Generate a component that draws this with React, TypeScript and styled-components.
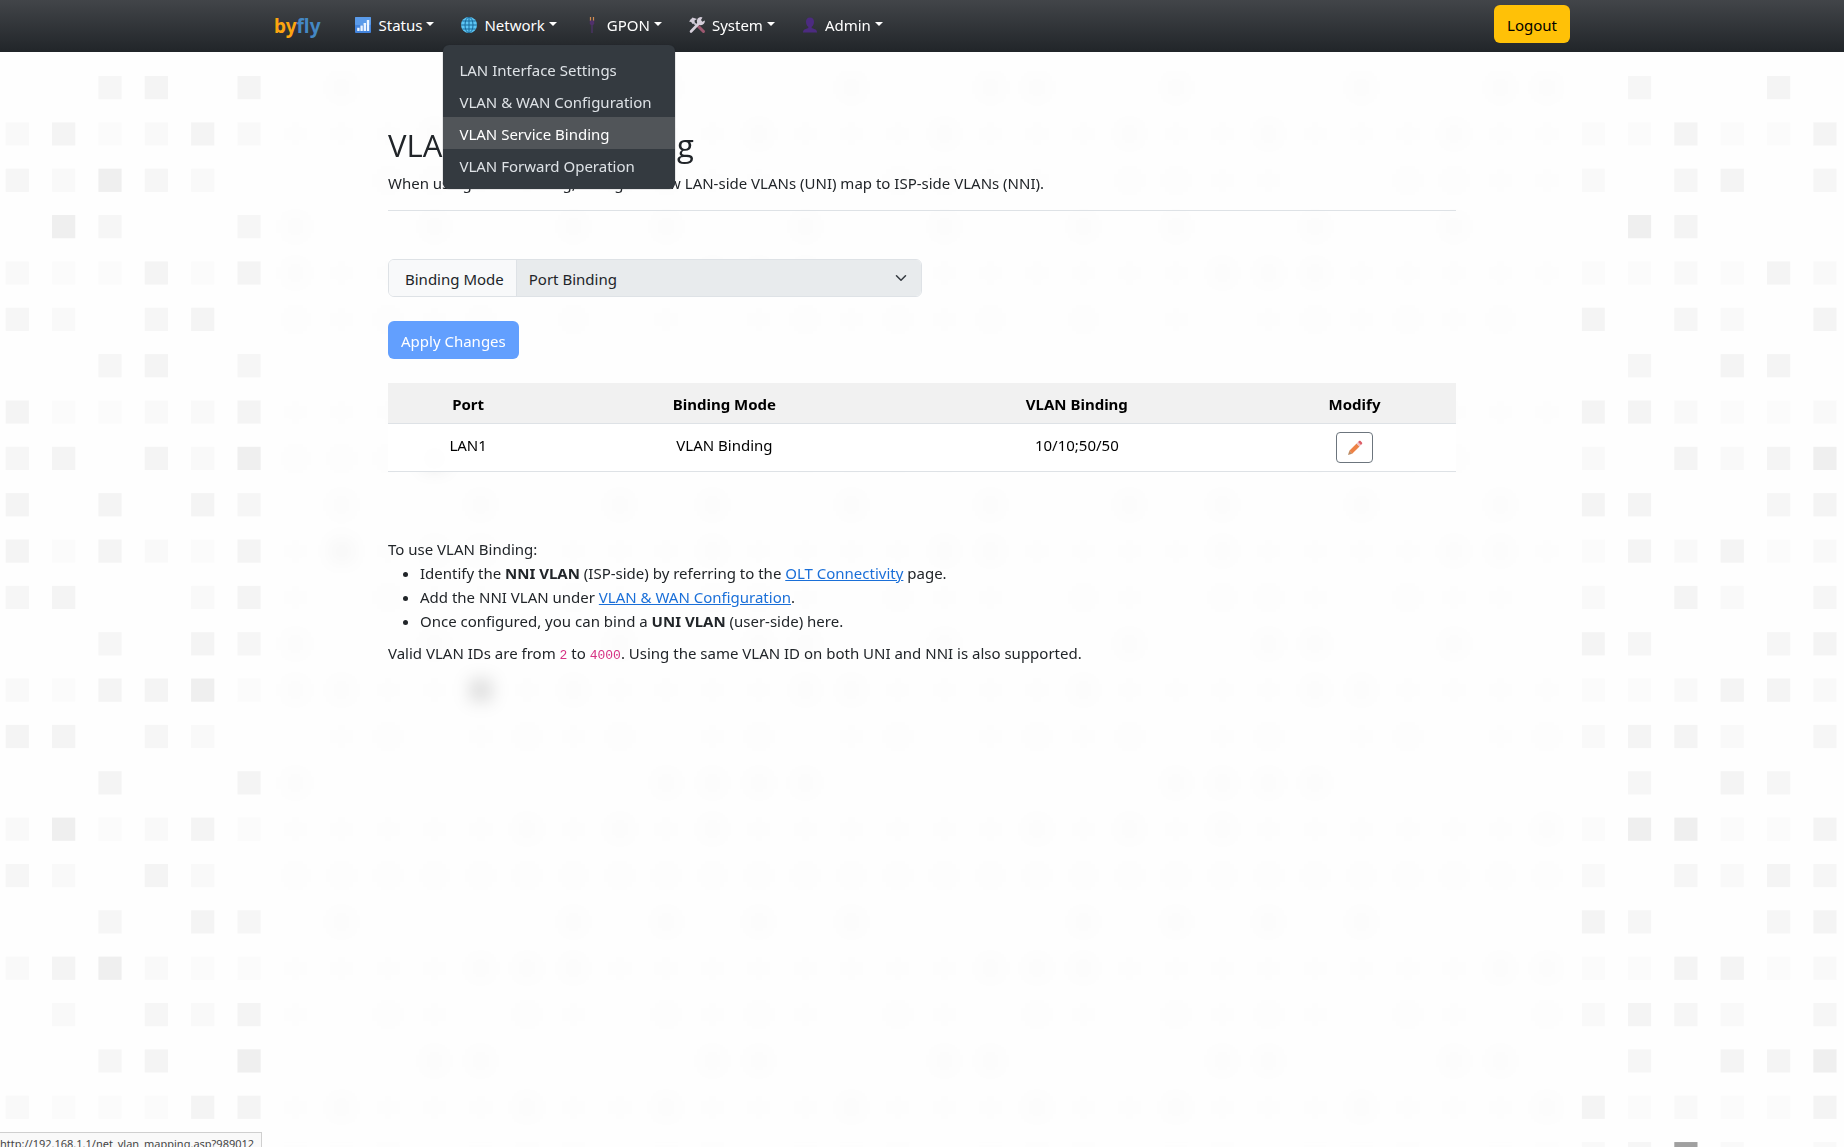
import React from "react";
import styled, { createGlobalStyle } from "styled-components";

const font = `"Noto Sans", "Open Sans", sans-serif`;

const GlobalStyle = createGlobalStyle`
  *, *::before, *::after { box-sizing: border-box; }
  html, body, #root { min-height: 100vh; }
  body {
    margin: 0;
    background: #fefefe;
    color: #212529;
    font-family: ${font};
    font-size: 15px;
    line-height: 24px;
  }
`;

const Page = styled.div`
  position: relative;
  isolation: isolate;
  display: flex;
  flex-direction: column;
  min-height: 100vh;
`;

const Backdrop = styled.svg`
  position: fixed;
  inset: 0;
  z-index: -1;
  width: 100%;
  height: 100%;
`;

const Navbar = styled.header`
  position: relative;
  z-index: 10;
  background: linear-gradient(180deg, #424549, #212529);
`;

const NavInner = styled.div`
  display: flex;
  align-items: flex-start;
  max-width: 1320px;
  height: 52px;
  margin: 0 auto;
  padding: 5px 12px 0;
`;

const Brand = styled.a`
  display: flex;
  margin-right: 24px;
  padding-top: 6px;
  color: #fca510;
  font-size: 19px;
  font-weight: 700;
  line-height: 30px;
  text-decoration: none;

  span { color: #4488c4; }
`;

const Menu = styled.ul`
  display: flex;
  flex: 1;
  gap: 8px;
  margin: 0;
  padding: 0;
  list-style: none;
`;

const MenuItem = styled.li`
  position: relative;
`;

const MenuLink = styled.a`
  display: flex;
  align-items: center;
  gap: 4px;
  padding: 8px;
  color: #fff;
  text-decoration: none;

  svg { width: 22px; height: 18px; }

  &::after {
    content: "";
    border: 4px solid transparent;
    border-top-color: #fff;
    border-bottom: 0;
    margin-bottom: 2px;
  }
`;

const Dropdown = styled.ul`
  position: absolute;
  top: 40px;
  left: -7px;
  min-width: 232px;
  margin: 0;
  padding: 8px 0;
  list-style: none;
  background: #343a40;
  border-radius: 6px;
  box-shadow: 0 0 1px #212529;
`;

const DropdownLink = styled.a<{ $active?: boolean }>`
  display: block;
  padding: 5px 16px 3px;
  color: ${(p) => (p.$active ? "#fff" : "#dee2e6")};
  background: ${(p) => (p.$active ? "#515559" : "transparent")};
  white-space: nowrap;
  text-decoration: none;
`;

const Button = styled.button`
  height: 38px;
  padding: 2px 12px 0;
  border: 1px solid transparent;
  border-radius: 6px;
  font: inherit;
`;

const LogoutButton = styled(Button)`
  background: #ffc107;
  color: #000;
`;

const ApplyButton = styled(Button)`
  margin: 24px 0;
  background: #629ffe;
  color: #fff;
`;

const EditButton = styled.button`
  display: inline-flex;
  align-items: center;
  justify-content: center;
  width: 37px;
  height: 31px;
  padding: 0;
  background: transparent;
  border: 1px solid #6c757d;
  border-radius: 4px;
  vertical-align: top;
`;

const Panel = styled.main`
  flex: 1;
  width: 100%;
  max-width: 1320px;
  margin: 0 auto;
  padding: 74px 24px 40px;
  background: rgba(254, 254, 254, 0.7);
  backdrop-filter: blur(8px);
`;

const Content = styled.div`
  max-width: 1068px;
  margin: 0 auto;
`;

const Title = styled.h2`
  margin: 0 0 7px;
  font-family: "Open Sans", sans-serif;
  font-size: 31px;
  font-weight: 400;
  line-height: 38px;
`;

const Text = styled.p`
  margin: 0;
`;

const Rule = styled.hr`
  margin: 15px 0 48px;
  border: 0;
  border-top: 1px solid #dee2e6;
`;

const Field = styled.div`
  display: flex;
  width: 50%;
  height: 38px;
  border: 1px solid #dee2e6;
  border-radius: 6px;
  overflow: hidden;
`;

const FieldLabel = styled.label`
  padding: 7px 12px 0 16px;
  background: #f8f9fa;
  border-right: 1px solid #dee2e6;
  white-space: nowrap;
`;

const SelectBox = styled.div`
  display: grid;
  flex: 1;
  align-items: center;
  background: #e8ebed;

  > * { grid-area: 1 / 1; }
  svg { justify-self: end; margin-right: 14px; pointer-events: none; }
`;

const Select = styled.select`
  width: 100%;
  height: 100%;
  padding: 2px 36px 0 12px;
  appearance: none;
  background: transparent;
  border: 0;
  color: #212529;
  font: inherit;
  opacity: 1;
`;

const Table = styled.table`
  width: 100%;
  table-layout: fixed;
  border-collapse: collapse;
  color: #000;
  text-align: center;

  th, td {
    padding: 8px;
    border-bottom: 1px solid #dee2e6;
    vertical-align: top;
  }
  th { padding: 9px 8px 7px; background: #f1f1f1; font-weight: 700; }
  td { background: rgba(255, 255, 255, 0.9); }
  td:not(:last-child) { line-height: 26px; }
`;

const Col = styled.col<{ $share: number }>`
  width: ${(p) => p.$share}%;
`;

const Help = styled.section`
  margin-top: 65px;

  ul { margin: 0 0 8px; padding-left: 32px; }
  a { color: #1a6fd8; }
  code { font-family: "Liberation Mono", monospace; font-size: 13px; color: #d63384; }
`;

const StatusBar = styled.div`
  position: fixed;
  left: 0;
  bottom: 0;
  z-index: 20;
  height: 15px;
  padding-right: 7px;
  overflow: hidden;
  background: #f9f9f9;
  border: 1px solid #cfcfcf;
  border-width: 1px 1px 0 0;
  color: #444;
  font-size: 11px;
  line-height: 22px;
  white-space: nowrap;
`;

/* Shade of each tile in the outer columns, row by row: 0 is empty, 6 the darkest. */
const leftTiles = [
  "003404", "241242", "325320", "053003", "211414", "320340", "003403", "411224",
  "340425", "404043", "414214", "340024", "003043", "214451", "440320", "004004",
  "251241", "320420", "003043", "245211", "020324", "003405", "211144", "000000",
];
const rightTiles = [
  "030040", "114114", "203403", "054000", "112142", "403204", "030440", "442112",
  "204245", "440034", "142412", "204203", "430034", "112442", "244203", "030430",
  "155114", "203243", "430034", "114412", "243203", "030445", "412114", "236202",
];
const shades = ["", "#fbfbfb", "#f9f9f9", "#f6f6f6", "#f4f4f4", "#efefef", "#a0a0a0"];
const darkTiles: Record<string, string> = { "13-10": "#9a9a9a", "8-9": "#c0c0c0", "10-7": "#e8e8e8" };

const PITCH = 46.35;
const TILE = 23.2;

/* Every third row is sparse, the one after it full and pale, the last one mixed. */
const middleTile = (row: number, col: number) => {
  const n = (row * 73 + col * 151 + row * col * 17) % 11;
  const kind = row % 3;
  if (kind === 0) return n < 4 ? 3 : 0;
  if (kind === 1) return n < 3 ? 3 : 1;
  return n < 3 ? 0 : n < 7 ? 1 : 2;
};

const tileFill = (row: number, col: number) => {
  const special = darkTiles[`${row}-${col}`];
  if (special) return special;
  if (col < 6) return shades[Number(leftTiles[row][col])];
  if (col > 33) return shades[Number(rightTiles[row][col - 34])];
  return shades[middleTile(row, col)];
};

const Tiles = () => (
  <Backdrop viewBox="0 0 1844 1147" preserveAspectRatio="xMidYMin slice" aria-hidden="true">
    {leftTiles.map((_, row) =>
      Array.from({ length: 40 }, (_, col) => {
        const fill = tileFill(row, col);
        return fill ? (
          <rect key={`${row}-${col}`} x={5.7 + col * PITCH} y={76 + row * PITCH} width={TILE} height={TILE} fill={fill} />
        ) : null;
      })
    )}
  </Backdrop>
);

const BarsIcon = () => (
  <svg viewBox="0 0 22 18" aria-hidden="true">
    <rect x="3" y="1" width="16" height="16" rx="1" fill="#4384dc" />
    <rect x="3" y="1" width="16" height="8" rx="1" fill="#5a9bea" />
    <path d="M5.2 15v-3.2h2.4V15zM8.4 15v-5.5h2.4V15zM11.6 15V7h2.4v8zM14.8 15V4h2.4v11z" fill="#eaf4ff" />
  </svg>
);

const GlobeIcon = () => (
  <svg viewBox="0 0 22 18" fill="none" stroke="#1b6a9c" strokeWidth="1" aria-hidden="true">
    <circle cx="11" cy="9" r="8" fill="#5cc6f5" stroke="none" />
    <ellipse cx="11" cy="9" rx="4" ry="7.8" />
    <path d="M11 1v16M3 9h16M4.4 5h13.2M4.4 13h13.2" />
  </svg>
);

const PlugIcon = () => (
  <svg viewBox="0 0 22 18" fill="none" aria-hidden="true">
    <path d="M9.5 1v4M12.5 1v4" stroke="#d08a52" strokeWidth="1.2" />
    <path d="M8.8 4.500h4.400v3L12 9.500h-2L8.800 7.500z" fill="#50306b" />
    <path d="M11 9.500v7.500" stroke="#56327a" strokeWidth="1" />
  </svg>
);

const ToolsIcon = () => (
  <svg viewBox="0 0 22 18" fill="none" strokeLinecap="round" aria-hidden="true">
    <path d="M11.500 9.500 17.500 15.500" stroke="#9d5870" strokeWidth="3" />
    <path d="M5 4.500 11 9.500" stroke="#c3bdcb" strokeWidth="2" />
    <path d="M3 5.500 6.500 1.500 11 3 8.500 4.500 8.800 6.200 6.500 8 5.300 6z" fill="#d2cbd8" />
    <path d="M14.500 5.500 5 15.500" stroke="#d6cfdb" strokeWidth="2.600" />
    <path d="M16.500 1.500a4 4 0 1 0 2.300 3l-2.600 1.300-1.400-1.600z" fill="#d6cfdb" />
  </svg>
);

const PersonIcon = () => (
  <svg viewBox="0 0 22 18" fill="#4c2b80" aria-hidden="true">
    <path d="M11 1.500c-2.700 0-4 1.800-4 4.300 0 2 .8 4.200 2.300 5v1.300L5.500 13.500C4.500 14 4 15 4 16.500h14c0-1.500-.5-2.500-1.500-3l-3.800-1.400v-1.300c1.500-.8 2.300-3 2.300-5 0-2.500-1.300-4.300-4-4.300z" />
  </svg>
);

const PencilIcon = () => (
  <svg width="16" height="16" viewBox="0 0 16 16" aria-hidden="true">
    <path d="M1 15 2.300 10.800 5.200 13.700z" fill="#b98a63" />
    <path d="M2.300 10.800 9.600 3.500l2.900 2.900-7.300 7.300z" fill="#ed8246" />
    <path d="M9.600 3.500 11 2.100 13.900 5 12.500 6.400z" fill="#efc3c8" />
    <path d="M11 2.100 12.100 1c.5-.5 1-.4 1.500 0l1.400 1.400c.4.5.4 1 0 1.500L13.900 5z" fill="#dc5f68" />
  </svg>
);

const menu = [
  { label: "Status", Icon: BarsIcon },
  {
    label: "Network",
    Icon: GlobeIcon,
    items: ["LAN Interface Settings", "VLAN & WAN Configuration", "VLAN Service Binding", "VLAN Forward Operation"],
  },
  { label: "GPON", Icon: PlugIcon },
  { label: "System", Icon: ToolsIcon },
  { label: "Admin", Icon: PersonIcon },
];

const columns = [
  { label: "Port", share: 15 },
  { label: "Binding Mode", share: 33 },
  { label: "VLAN Binding", share: 33 },
  { label: "Modify", share: 19 },
];

export default function App() {
  return (
    <Page>
      <GlobalStyle />
      <Tiles />
      <Navbar>
        <NavInner>
          <Brand href="#">by<span>fly</span></Brand>
          <Menu>
            {menu.map(({ label, Icon, items }) => (
              <MenuItem key={label}>
                <MenuLink href="#"><Icon />{label}</MenuLink>
                {items && (
                  <Dropdown>
                    {items.map((item) => (
                      <li key={item}>
                        <DropdownLink href="#" $active={item === "VLAN Service Binding"}>{item}</DropdownLink>
                      </li>
                    ))}
                  </Dropdown>
                )}
              </MenuItem>
            ))}
          </Menu>
          <LogoutButton type="button">Logout</LogoutButton>
        </NavInner>
      </Navbar>

      <Panel>
        <Content>
          <Title>VLAN Service Binding</Title>
          <Text>When using VLAN Binding, configure how LAN-side VLANs (UNI) map to ISP-side VLANs (NNI).</Text>
          <Rule />
          <Field>
            <FieldLabel htmlFor="mode">Binding Mode</FieldLabel>
            <SelectBox>
              <Select id="mode" disabled defaultValue="port">
                <option value="port">Port Binding</option>
                <option value="vlan">VLAN Binding</option>
              </Select>
              <svg width="12" height="12" viewBox="0 0 16 16" fill="none" stroke="#343a40" strokeWidth="2" strokeLinecap="round" strokeLinejoin="round" aria-hidden="true">
                <path d="m2 5 6 6 6-6" />
              </svg>
            </SelectBox>
          </Field>
          <ApplyButton type="button" disabled>Apply Changes</ApplyButton>
          <Table>
            <colgroup>{columns.map((c) => <Col key={c.label} $share={c.share} />)}</colgroup>
            <thead>
              <tr>{columns.map((c) => <th key={c.label} scope="col">{c.label}</th>)}</tr>
            </thead>
            <tbody>
              <tr>
                <td>LAN1</td>
                <td>VLAN Binding</td>
                <td>10/10;50/50</td>
                <td><EditButton type="button" aria-label="Modify LAN1"><PencilIcon /></EditButton></td>
              </tr>
            </tbody>
          </Table>
          <Help>
            <Text>To use VLAN Binding:</Text>
            <ul>
              <li>Identify the <strong>NNI VLAN</strong> (ISP-side) by referring to the <a href="#">OLT Connectivity</a> page.</li>
              <li>Add the NNI VLAN under <a href="#">VLAN &amp; WAN Configuration</a>.</li>
              <li>Once configured, you can bind a <strong>UNI VLAN</strong> (user-side) here.</li>
            </ul>
            <Text>Valid VLAN IDs are from <code>2</code> to <code>4000</code>. Using the same VLAN ID on both UNI and NNI is also supported.</Text>
          </Help>
        </Content>
      </Panel>
      <StatusBar>http://192.168.1.1/net_vlan_mapping.asp?989012</StatusBar>
    </Page>
  );
}
